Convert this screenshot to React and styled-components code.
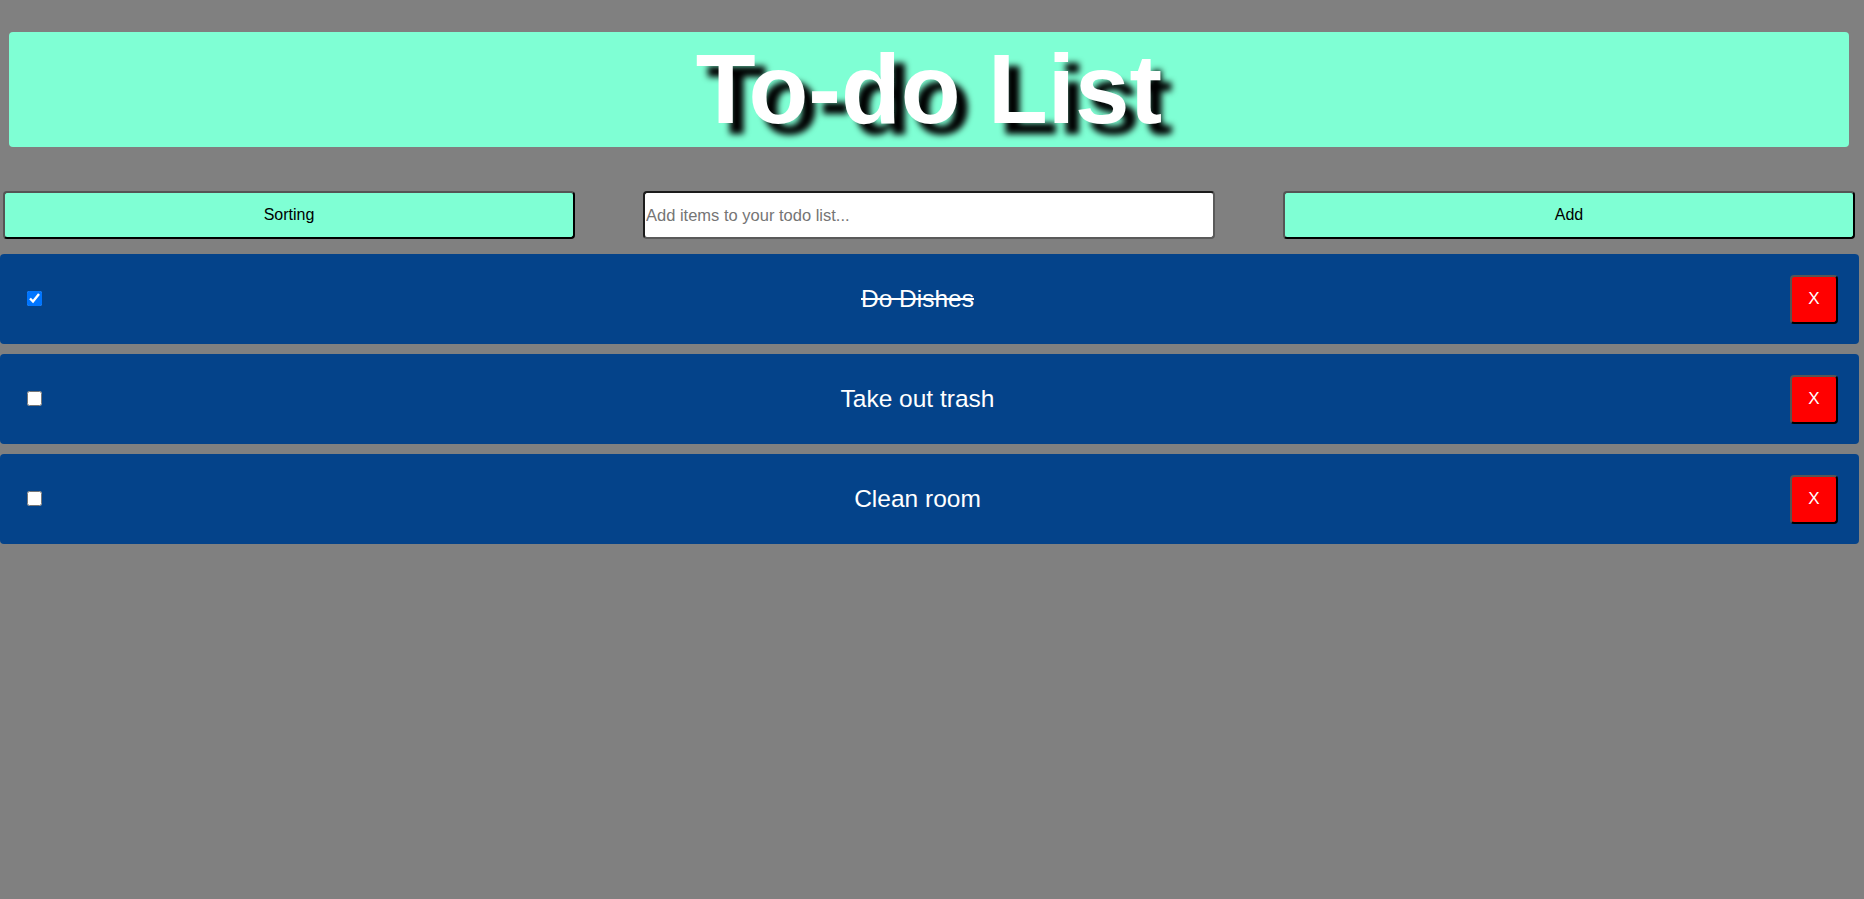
import React, { useState } from "react";
import styled, { createGlobalStyle } from "styled-components";

const GlobalStyle = createGlobalStyle`
  html, body {
    margin: 0;
    padding: 0;
    background: #808080;
    font-family: "Liberation Sans", Arial, sans-serif;
  }
`;

const Page = styled.div`
  padding-top: 32px;
  min-height: 867px;
`;

const Header = styled.header`
  margin: 0 15px 0 9px;
  height: 115px;
  background: #7fffd4;
  border-radius: 4px;
  display: flex;
  justify-content: center;
  align-items: center;
`;

const Title = styled.h1`
  margin: 0;
  font-family: "Liberation Sans", Arial, sans-serif;
  font-size: 98px;
  font-weight: 700;
  line-height: 115px;
  color: #ffffff;
  text-shadow: 11px 11px 6px #000000;
`;

const Toolbar = styled.div`
  margin-top: 44px;
  padding: 0 9px 0 3px;
  display: flex;
  justify-content: space-between;
  align-items: center;
`;

const ToolButton = styled.button`
  box-sizing: border-box;
  width: 572px;
  height: 48px;
  background: #7fffd4;
  border: 2px solid;
  border-color: #555555 #000000 #000000 #555555;
  border-radius: 4px;
  font-family: "Liberation Sans", Arial, sans-serif;
  font-size: 16px;
  color: #000000;
  cursor: pointer;
`;

const TextInput = styled.input`
  box-sizing: border-box;
  width: 572px;
  height: 48px;
  background: #ffffff;
  border: 2px solid;
  border-color: #1c1c1c #5a5a5a #5a5a5a #1c1c1c;
  border-radius: 4px;
  padding: 1px 1px;
  font-family: "Liberation Sans", Arial, sans-serif;
  font-size: 16.5px;
  color: #000;
  outline: none;
  &::placeholder {
    color: #757575;
  }
`;

const List = styled.ul`
  list-style: none;
  margin: 15px 5px 0 0;
  padding: 0;
  display: flex;
  flex-direction: column;
  gap: 10px;
`;

const Row = styled.li`
  box-sizing: border-box;
  height: 90px;
  background: #04438a;
  border-radius: 4px;
  display: flex;
  align-items: center;
  padding: 0 21px 0 23px;
`;

const Check = styled.input`
  width: 15px;
  height: 15px;
  margin: 2px 3px 3px 4px;
`;

const ItemText = styled.span`
  flex: 1;
  text-align: center;
  font-size: 24.5px;
  color: #ffffff;
  text-decoration: ${(p) => (p.$done ? "line-through" : "none")};
`;

const DeleteButton = styled.button`
  box-sizing: border-box;
  width: 48px;
  height: 49px;
  background: #ff0000;
  border: 2px solid;
  border-color: #555555 #000000 #000000 #555555;
  border-radius: 4px;
  color: #ffffff;
  font-family: "Liberation Sans", Arial, sans-serif;
  font-size: 17px;
  padding: 0;
  cursor: pointer;
`;

export default function App() {
  const [items, setItems] = useState([
    { id: 1, text: "Do Dishes", done: true },
    { id: 2, text: "Take out trash", done: false },
    { id: 3, text: "Clean room", done: false },
  ]);
  const [value, setValue] = useState("");

  const toggle = (id) =>
    setItems((list) => list.map((i) => (i.id === id ? { ...i, done: !i.done } : i)));
  const remove = (id) => setItems((list) => list.filter((i) => i.id !== id));
  const add = () => {
    if (!value.trim()) return;
    setItems((list) => [...list, { id: Date.now(), text: value, done: false }]);
    setValue("");
  };
  const sort = () =>
    setItems((list) => [...list].sort((a, b) => a.text.localeCompare(b.text)));

  return (
    <>
      <GlobalStyle />
      <Page>
        <Header>
          <Title>To-do List</Title>
        </Header>
        <Toolbar>
          <ToolButton onClick={sort}>Sorting</ToolButton>
          <TextInput
            placeholder="Add items to your todo list..."
            value={value}
            onChange={(e) => setValue(e.target.value)}
          />
          <ToolButton onClick={add}>Add</ToolButton>
        </Toolbar>
        <List>
          {items.map((item) => (
            <Row key={item.id}>
              <Check type="checkbox" checked={item.done} onChange={() => toggle(item.id)} />
              <ItemText $done={item.done}>{item.text}</ItemText>
              <DeleteButton onClick={() => remove(item.id)}>X</DeleteButton>
            </Row>
          ))}
        </List>
      </Page>
    </>
  );
}
